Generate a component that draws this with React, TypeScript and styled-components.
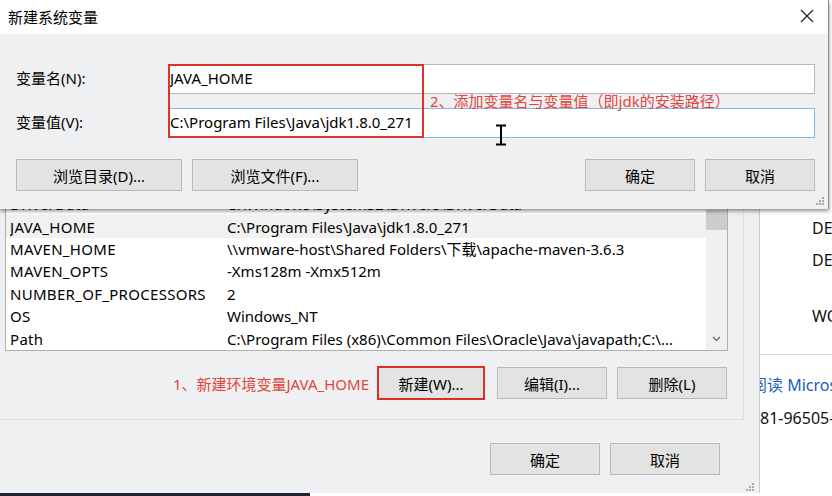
import React from 'react';
import styled, { createGlobalStyle } from 'styled-components';

const GlobalStyle = createGlobalStyle`
  html, body {
    margin: 0;
    padding: 0;
    background: #ffffff;
  }
  body {
    font-family: 'Noto Sans', 'Noto Sans CJK SC', sans-serif;
    font-size: 15px;
    color: #000;
  }
`;

const FONT = `'Noto Sans', 'Noto Sans CJK SC', sans-serif`;

const Desktop = styled.div`
  position: relative;
  width: 832px;
  height: 496px;
  overflow: hidden;
  display: flex;
  flex-direction: column;
  background: #ffffff;
  font-family: ${FONT};
`;

const WindowsRow = styled.div`
  display: flex;
  height: 493px;
`;

const Taskbar = styled.div`
  display: flex;
  align-items: center;
  width: 310px;
  height: 3px;
  background: #1d2631;
`;

/* ---------- background window (环境变量) ---------- */

const BackWindow = styled.div`
  position: relative;
  width: 760px;
  flex-shrink: 0;
  display: flex;
  flex-direction: column;
  background: #eef0f1;
  border-right: 1px solid #c9cbcd;
  box-sizing: border-box;
`;

const GroupBox = styled.div`
  width: 744px;
  height: 420px;
  box-sizing: border-box;
  padding-top: 192px;
  border-right: 1px solid #dcdee0;
  border-bottom: 1px solid #dcdee0;
  display: flex;
  flex-direction: column;
`;

const ListBox = styled.div`
  margin-left: 5px;
  width: 723px;
  height: 159px;
  box-sizing: border-box;
  border: 1px solid #adb0b3;
  background: #ffffff;
  display: flex;
  overflow: hidden;
`;

const Rows = styled.div`
  flex: 1;
  display: flex;
  flex-direction: column;
`;

const Row = styled.div<{ $selected?: boolean }>`
  display: flex;
  align-items: center;
  height: 22.4px;
  flex-shrink: 0;
  padding-left: 4px;
  background: ${(p) => (p.$selected ? '#f1f1f1' : 'transparent')};
  font-size: 15px;
  white-space: nowrap;
`;

const NameCell = styled.span`
  width: 217px;
  flex-shrink: 0;
  overflow: hidden;
  letter-spacing: 0.3px;
`;

const ValueCell = styled.span`
  flex: 1;
  overflow: hidden;
`;

const ScrollBar = styled.div`
  width: 21px;
  flex-shrink: 0;
  background: #f0f0f0;
  display: flex;
  flex-direction: column;
  justify-content: space-between;
  align-items: center;
`;

const Thumb = styled.div`
  width: 21px;
  height: 20px;
  margin-top: 17px;
  background: #cdcdcd;
`;

const ArrowDown = styled.div`
  height: 22px;
  display: flex;
  align-items: center;
  justify-content: center;
`;

const ListActions = styled.div`
  display: flex;
  align-items: center;
  justify-content: flex-end;
  gap: 10px;
  padding-right: 16px;
  margin-top: 15px;
`;

const Annotation = styled.span`
  color: #e2453d;
  font-size: 15px;
  white-space: nowrap;
`;

const Button = styled.button<{ $w?: number; $marked?: boolean }>`
  width: ${(p) => p.$w ?? 110}px;
  height: ${(p) => (p.$marked ? 34 : 32)}px;
  box-sizing: border-box;
  margin: 0;
  padding: 0;
  background: #e3e3e3;
  border: ${(p) => (p.$marked ? '2px solid #dc2f25' : '1px solid #b9b9b9')};
  font-family: ${FONT};
  font-size: 15px;
  color: #000;
  white-space: nowrap;
`;

const Footer = styled.div`
  display: flex;
  justify-content: flex-end;
  gap: 10px;
  width: 720px;
  margin-top: 23px;
`;

const Grip = styled.div<{ $right: number; $bottom: number }>`
  position: absolute;
  right: ${(p) => p.$right}px;
  bottom: ${(p) => p.$bottom}px;
  width: 10px;
  height: 10px;
  display: flex;
`;

/* ---------- right background window ---------- */

const RightPane = styled.div`
  flex: 1;
  overflow: hidden;
  display: flex;
  flex-direction: column;
  background: #ffffff;
  font-size: 16px;
  white-space: nowrap;
`;

const InfoLine = styled.div<{ $top: number; $indent?: number; $blue?: boolean }>`
  margin-top: ${(p) => p.$top}px;
  padding-left: ${(p) => p.$indent ?? 0}px;
  height: 22px;
  line-height: 22px;
  color: ${(p) => (p.$blue ? '#1a64b6' : '#111')};
`;

const Rule = styled.div`
  margin-top: 27px;
  height: 1px;
  background: #d8d8d8;
`;

/* ---------- foreground dialog (新建系统变量) ---------- */

const Dialog = styled.div`
  position: absolute;
  left: 0;
  top: 0;
  width: 829px;
  height: 209px;
  display: flex;
  flex-direction: column;
  background: #eff0f1;
  border-right: 1px solid #8c8c8c;
  box-sizing: border-box;
  box-shadow: 0 2px 4px rgba(0, 0, 0, 0.45);
`;

const TitleBar = styled.div`
  height: 34px;
  flex-shrink: 0;
  display: flex;
  align-items: center;
  justify-content: space-between;
  padding: 0 14px 2px 8px;
  box-sizing: border-box;
  background: #ffffff;
  font-size: 15px;
`;

const CloseIcon = styled.div`
  display: flex;
  align-items: center;
`;

const DialogBody = styled.div`
  position: relative;
  flex: 1;
  display: flex;
  flex-direction: column;
  padding: 30px 13px 0 16px;
`;

const Field = styled.div<{ $gap?: number }>`
  display: flex;
  align-items: center;
  margin-top: ${(p) => p.$gap ?? 0}px;
`;

const Label = styled.label`
  width: 152px;
  flex-shrink: 0;
  font-size: 15px;
  margin-top: -3px;
`;

const Input = styled.div<{ $focused?: boolean }>`
  flex: 1;
  height: 30px;
  box-sizing: border-box;
  display: flex;
  align-items: center;
  padding-left: 1px;
  padding-bottom: 2px;
  background: #ffffff;
  border: 1px solid ${(p) => (p.$focused ? '#84b7e4' : '#b4b6b8')};
  font-size: 15px;
  white-space: nowrap;
`;

const DialogButtons = styled.div`
  display: flex;
  gap: 10px;
  margin-top: 21px;
`;

const Spacer = styled.div`
  flex: 1;
`;

const Highlight = styled.div`
  position: absolute;
  left: 168px;
  top: 30px;
  width: 256px;
  height: 74px;
  box-sizing: border-box;
  border: 2px solid #d9352c;
  pointer-events: none;
`;

const FloatingNote = styled(Annotation)`
  position: absolute;
  left: 430px;
  top: 56px;
  line-height: 22px;
`;

const Cursor = styled.div`
  position: absolute;
  left: 494px;
  top: 90px;
  display: flex;
`;

const rows = [
  ['DriverData', 'C:\\Windows\\System32\\Drivers\\DriverData'],
  ['JAVA_HOME', 'C:\\Program Files\\Java\\jdk1.8.0_271'],
  ['MAVEN_HOME', '\\\\vmware-host\\Shared Folders\\下载\\apache-maven-3.6.3'],
  ['MAVEN_OPTS', '-Xms128m -Xmx512m'],
  ['NUMBER_OF_PROCESSORS', '2'],
  ['OS', 'Windows_NT'],
  ['Path', 'C:\\Program Files (x86)\\Common Files\\Oracle\\Java\\javapath;C:\\...'],
];

function GripDots() {
  return (
    <svg width="10" height="10" viewBox="0 0 10 10">
      {[
        [8, 2],
        [5, 5],
        [8, 5],
        [2, 8],
        [5, 8],
        [8, 8],
      ].map(([x, y]) => (
        <rect key={`${x}-${y}`} x={x - 1} y={y - 1} width="2" height="2" fill="#a8a8a8" />
      ))}
    </svg>
  );
}

export default function App() {
  return (
    <>
      <GlobalStyle />
      <Desktop>
        <WindowsRow>
          <BackWindow>
            <GroupBox>
              <ListBox>
                <Rows>
                  {rows.map(([name, value]) => (
                    <Row key={name} $selected={name === 'JAVA_HOME'}>
                      <NameCell>{name}</NameCell>
                      <ValueCell>{value}</ValueCell>
                    </Row>
                  ))}
                </Rows>
                <ScrollBar>
                  <Thumb />
                  <ArrowDown>
                    <svg width="9" height="6" viewBox="0 0 9 6">
                      <path d="M1 1l3.5 3.5L8 1" fill="none" stroke="#606060" strokeWidth="1.2" />
                    </svg>
                  </ArrowDown>
                </ScrollBar>
              </ListBox>
              <ListActions>
                <Annotation style={{ marginRight: -2 }}>1、新建环境变量JAVA_HOME</Annotation>
                <Button $w={108} $marked style={{ marginRight: 2 }}>
                  新建(W)...
                </Button>
                <Button>编辑(I)...</Button>
                <Button>删除(L)</Button>
              </ListActions>
            </GroupBox>
            <Footer>
              <Button>确定</Button>
              <Button>取消</Button>
            </Footer>
            <Grip $right={4} $bottom={1}>
              <GripDots />
            </Grip>
          </BackWindow>
          <RightPane>
            <InfoLine $top={217} $indent={52}>DE</InfoLine>
            <InfoLine $top={10} $indent={52}>DE</InfoLine>
            <InfoLine $top={34} $indent={52}>WO</InfoLine>
            <Rule />
            <InfoLine $top={19} $blue style={{ marginLeft: -9 }}>
              阅读 Micros
            </InfoLine>
            <InfoLine $top={11}>81-96505-</InfoLine>
          </RightPane>
        </WindowsRow>
        <Taskbar />

        <Dialog>
          <TitleBar>
            <span>新建系统变量</span>
            <CloseIcon>
              <svg width="14" height="14" viewBox="0 0 14 14">
                <path d="M1 1l12 12M13 1L1 13" stroke="#222" strokeWidth="1.2" />
              </svg>
            </CloseIcon>
          </TitleBar>
          <DialogBody>
            <Field>
              <Label>变量名(N):</Label>
              <Input>JAVA_HOME</Input>
            </Field>
            <Field $gap={14}>
              <Label>变量值(V):</Label>
              <Input $focused>C:\Program Files\Java\jdk1.8.0_271</Input>
            </Field>
            <DialogButtons>
              <Button $w={166}>浏览目录(D)...</Button>
              <Button $w={166}>浏览文件(F)...</Button>
              <Spacer />
              <Button>确定</Button>
              <Button>取消</Button>
            </DialogButtons>
            <Highlight />
            <FloatingNote>2、添加变量名与变量值（即jdk的安装路径）</FloatingNote>
            <Cursor>
              <svg width="14" height="22" viewBox="0 0 14 22">
                <path d="M2 1.5h10M7 1.5v19M2 20.5h10" stroke="#000" strokeWidth="2" fill="none" />
              </svg>
            </Cursor>
            <Grip $right={3} $bottom={3}>
              <GripDots />
            </Grip>
          </DialogBody>
        </Dialog>
      </Desktop>
    </>
  );
}
